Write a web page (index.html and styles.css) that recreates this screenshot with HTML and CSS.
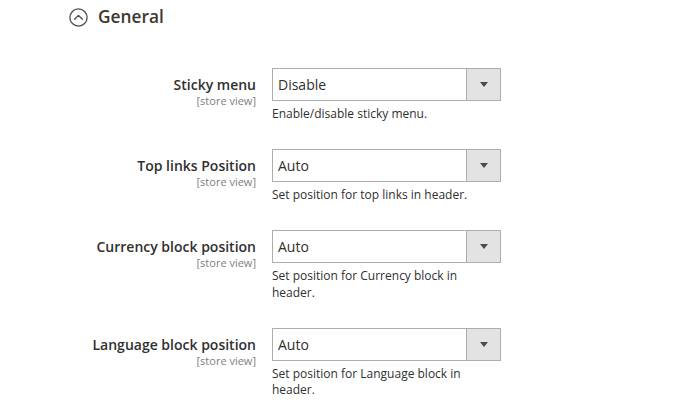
FILE: index.html
```html
<!DOCTYPE html>
<html>
<head>
<meta charset="utf-8">
<link rel="stylesheet" href="styles.css">
</head>
<body>
<div class="page">
  <div class="section-title">
    <svg class="toggle-icon" width="19" height="19" viewBox="0 0 19 19">
      <circle cx="9.5" cy="9.5" r="8.6" fill="none" stroke="#514943" stroke-width="1.3"/>
      <path d="M5.6 11.2 L9.5 7.4 L13.4 11.2" fill="none" stroke="#514943" stroke-width="1.3" stroke-linecap="round" stroke-linejoin="round"/>
    </svg>
    <span class="title-text">General</span>
  </div>

  <div class="fields">
    <div class="field">
      <div class="label"><span class="label-text">Sticky menu</span><span class="scope">[store view]</span></div>
      <div class="control">
        <div class="select"><span class="value">Disable</span><span class="arrow"><span class="tri"></span></span></div>
        <div class="note">Enable/disable sticky menu.</div>
      </div>
    </div>
    <div class="field">
      <div class="label"><span class="label-text">Top links Position</span><span class="scope">[store view]</span></div>
      <div class="control">
        <div class="select"><span class="value">Auto</span><span class="arrow"><span class="tri"></span></span></div>
        <div class="note">Set position for top links in header.</div>
      </div>
    </div>
    <div class="field">
      <div class="label"><span class="label-text">Currency block position</span><span class="scope">[store view]</span></div>
      <div class="control">
        <div class="select"><span class="value">Auto</span><span class="arrow"><span class="tri"></span></span></div>
        <div class="note">Set position for Currency block in header.</div>
      </div>
    </div>
    <div class="field">
      <div class="label"><span class="label-text">Language block position</span><span class="scope">[store view]</span></div>
      <div class="control">
        <div class="select"><span class="value">Auto</span><span class="arrow"><span class="tri"></span></span></div>
        <div class="note">Set position for Language block in header.</div>
      </div>
    </div>
  </div>
</div>
</body>
</html>
```

FILE: styles.css
```css
html, body {
  margin: 0;
  padding: 0;
  background: #ffffff;
}
body {
  font-family: "Open Sans", "Noto Sans", sans-serif;
  color: #303030;
}
.page {
  width: 685px;
  height: 413px;
  overflow: hidden;
}
.section-title {
  display: flex;
  align-items: center;
  height: 34px;
  padding-left: 69px;
}
.toggle-icon {
  display: block;
  margin-right: 10px;
}
.title-text {
  font-size: 17.3px;
  font-weight: 600;
  color: #41362f;
  line-height: 22px;
  margin-top: -1px;
}
.fields {
  padding-top: 34px;
  display: flex;
  flex-direction: column;
  gap: 26.5px;
}
.field {
  display: grid;
  grid-template-columns: 256px 229px;
  column-gap: 16px;
}
.label {
  display: flex;
  flex-direction: column;
  align-items: flex-end;
  padding-top: 7px;
}
.label-text {
  font-size: 14px;
  font-weight: 600;
  line-height: 19px;
  color: #303030;
}
.scope {
  font-size: 11px;
  line-height: 13px;
  color: #808080;
}
.control {
  display: flex;
  flex-direction: column;
}
.select {
  display: flex;
  height: 33px;
  box-sizing: border-box;
  border: 1px solid #adadad;
  background: #fff;
}
.value {
  flex: 1;
  font-size: 14px;
  line-height: 31px;
  padding-left: 5px;
  color: #303030;
}
.arrow {
  width: 33px;
  border-left: 1px solid #adadad;
  background: #e3e3e3;
  display: flex;
  align-items: center;
  justify-content: center;
}
.tri {
  width: 0;
  height: 0;
  border-left: 4px solid transparent;
  border-right: 4px solid transparent;
  border-top: 5px solid #514943;
}
.note {
  margin-top: 5px;
  font-size: 12px;
  line-height: 16.5px;
  color: #303030;
  padding-right: 30px;
}
```
